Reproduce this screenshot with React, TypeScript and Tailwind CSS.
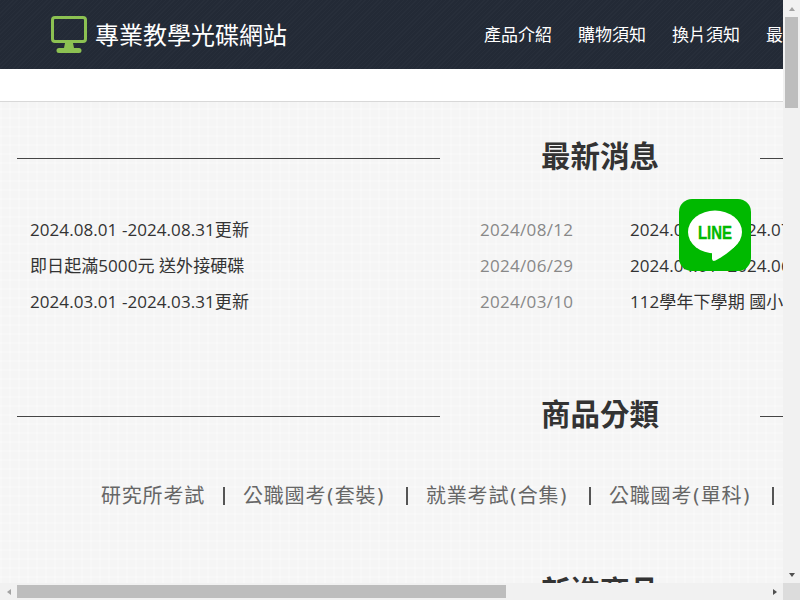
import { Fragment } from "react";

const FONT_STACK = "font-['Open_Sans','Noto_Sans_CJK_TC',sans-serif]";

const NAV_ITEMS = ["產品介紹", "購物須知", "換片須知", "最新消息"];

const CATEGORIES = ["研究所考試", "公職國考(套裝)", "就業考試(合集)", "公職國考(單科)", "就業考試(單科)"];

const NEWS_ROWS = [
  {
    left: "2024.08.01 -2024.08.31更新",
    date: "2024/08/12",
    right: "2024.07.01 -2024.07.31更新",
  },
  {
    left: "即日起滿5000元 送外接硬碟",
    date: "2024/06/29",
    right: "2024.04.01 -2024.06.30更新",
  },
  {
    left: "2024.03.01 -2024.03.31更新",
    date: "2024/03/10",
    right: "112學年下學期 國小教師甄試",
  },
];

const SectionTitle = ({ title }: { title: string }) => (
  <div className="flex items-center px-[17px]">
    <div className="h-px flex-1 bg-[#444]" />
    <h2 className="h-[40px] w-[320px] text-center text-[29.5px] leading-[36px] font-bold text-[#333]">
      {title}
    </h2>
    <div className="h-px flex-1 bg-[#444]" />
  </div>
);

const Arrow = ({ dir }: { dir: "up" | "down" | "left" | "right" }) => {
  const points = {
    up: "1,6 4,2 7,6",
    down: "1,2 4,6 7,2",
    left: "6,1 2,4 6,7",
    right: "2,1 6,4 2,7",
  };
  const color = dir === "down" || dir === "right" ? "#505050" : "#a3a3a3";
  return (
    <svg width="8" height="8" viewBox="0 0 8 8">
      <polygon points={points[dir]} fill={color} />
    </svg>
  );
};

const App = () => {
  return (
    <div className={`relative flex h-[600px] w-[800px] flex-col overflow-hidden ${FONT_STACK}`}>
      <div className="flex min-h-0 flex-1">
        <main className="w-[783px] overflow-hidden bg-[#f5f5f5] bg-[linear-gradient(#ffffff33_2px,transparent_2px),linear-gradient(90deg,#ffffff33_2px,transparent_2px)] bg-[length:9px_9px]">
          <div className="w-[1200px]">
            <header className="flex h-[69px] items-center justify-between bg-[#232a36] bg-[repeating-linear-gradient(135deg,#ffffff05_0,#ffffff05_1px,transparent_1px,transparent_3px)] pl-[51px]">
              <div className="flex items-center gap-[8px]">
                <svg width="36" height="37" viewBox="0 0 36 37" fill="none">
                  <rect x="1.5" y="1.5" width="33" height="24" rx="2.5" stroke="#8cc152" strokeWidth="3" />
                  <path d="M14 27h8l1 5h5a2.500 2.500 0 0 1 0 5H8a2.500 2.500 0 0 1 0-5h5z" fill="#8cc152" />
                </svg>
                <span className="text-[24px] leading-none text-white">專業教學光碟網站</span>
              </div>
              <nav className="flex gap-[26px] pr-[366px]">
                {NAV_ITEMS.map((item) => (
                  <a key={item} className="text-[17px] whitespace-nowrap text-white">
                    {item}
                  </a>
                ))}
              </nav>
            </header>
            <div className="h-[33px] border-b border-[#d8d8d8] bg-white" />

            <section className="pt-[36px]">
              <SectionTitle title="最新消息" />
              <div className="mt-[34px] pl-[30px] text-[17px] leading-[36px] tracking-[0.07px] text-[#333]">
                {NEWS_ROWS.map((row) => (
                  <div key={row.date} className="flex whitespace-nowrap">
                    <span className="w-[450px]">{row.left}</span>
                    <span className="w-[150px] tracking-[0.3px] text-[#888]">{row.date}</span>
                    <span>{row.right}</span>
                  </div>
                ))}
              </div>
            </section>

            <section className="pt-[76px]">
              <SectionTitle title="商品分類" />
              <div className="mt-[42px] flex items-center pl-[101px] font-['DejaVu_Sans','Noto_Sans_CJK_TC',sans-serif] text-[20px] leading-[36px] tracking-[0.8px] whitespace-nowrap text-[#666]">
                {CATEGORIES.map((category, index) => (
                  <Fragment key={category}>
                    {index > 0 && <span className="mx-[18px] h-[18px] w-[2px] bg-[#555]" />}
                    <span className={index > 0 ? "w-[145px]" : ""}>{category}</span>
                  </Fragment>
                ))}
              </div>
            </section>

            <section className="pt-[59px]">
              <SectionTitle title="新進商品" />
            </section>
          </div>
        </main>

        <div className="flex w-[17px] flex-col bg-[#f1f1f1]">
          <div className="flex h-[17px] items-center justify-center">
            <Arrow dir="up" />
          </div>
          <div className="flex-1 px-[2px]">
            <div className="h-[91px] bg-[#bdbdbd]" />
          </div>
          <div className="flex h-[17px] items-center justify-center">
            <Arrow dir="down" />
          </div>
        </div>
      </div>

      <div className="flex h-[17px] bg-[#f1f1f1]">
        <div className="flex w-[17px] items-center justify-center">
          <Arrow dir="left" />
        </div>
        <div className="w-[749px] py-[2px]">
          <div className="h-[13px] w-[489px] bg-[#bdbdbd]" />
        </div>
        <div className="flex w-[17px] items-center justify-center">
          <Arrow dir="right" />
        </div>
        <div className="w-[17px] bg-[#dcdcdc]" />
      </div>

      <div className="absolute top-[199px] left-[679px] h-[72px] w-[72px] rounded-[13px] bg-[#00b900]">
        <svg width="72" height="72" viewBox="0 0 72 72">
          <ellipse cx="36" cy="33" rx="27" ry="21.5" fill="#ffffff" />
          <path d="M33 50 L33 59.500 Q33 63 36.500 61.500 C44 57.500 52 52 57 46 Z" fill="#ffffff" />
          <text
            x="36"
            y="40"
            textAnchor="middle"
            fontSize="18"
            fontWeight="700"
            fill="#00b900"
            stroke="#00b900"
            strokeWidth="0.4"
            fontFamily="'Liberation Sans', sans-serif"
            textLength="34"
            lengthAdjust="spacingAndGlyphs"
          >
            LINE
          </text>
        </svg>
      </div>
    </div>
  );
};

export default App;
